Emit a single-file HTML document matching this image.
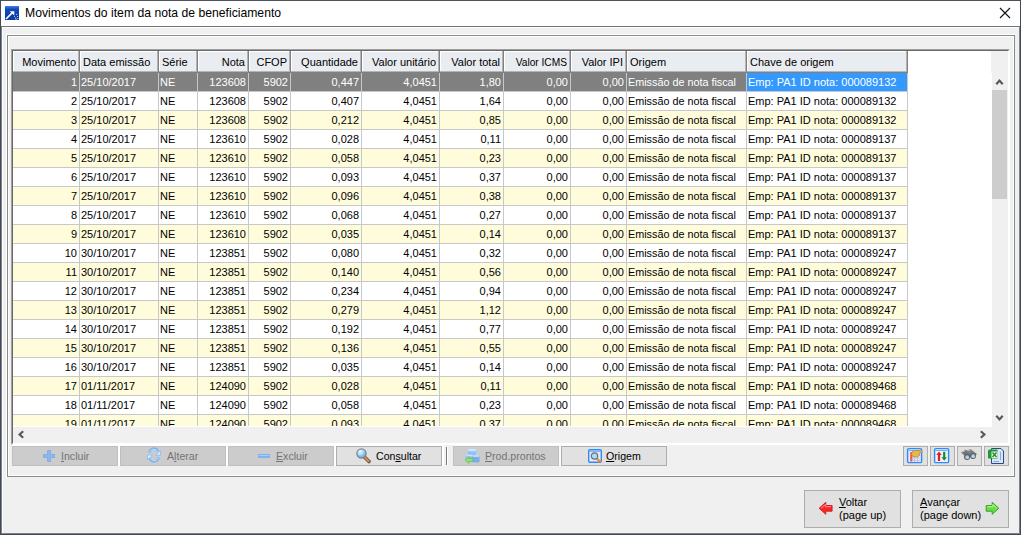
<!DOCTYPE html><html><head><meta charset="utf-8"><style>
*{box-sizing:border-box}
html,body{margin:0;padding:0;background:#fff;width:1025px;height:537px;overflow:hidden;font-family:"Liberation Sans",sans-serif;}
.a{position:absolute}
.t{position:absolute;white-space:nowrap;font-size:11px;line-height:13px;color:#000}
.hd{position:absolute;top:0;height:22px;background:#e9ecf0;box-shadow:inset -1px -1px 0 #808080,inset -2px -2px 0 #b4b4b4,inset 1px 1px 0 #fff}
.btn{position:absolute;top:446px;height:20px;background:#cccccc;border:1px solid #bfbfbf}
.btn.en{background:#e1e1e1;border-color:#adadad}
.bl{position:absolute;top:3px;font-size:10.6px;line-height:13px;white-space:nowrap;color:#747474}
.en .bl{color:#000}
.u{text-decoration:underline}
</style></head><body>

<div class="a" style="left:0;top:0;width:1021px;height:535px;background:#f0f0f0"></div>
<div class="a" style="left:0;top:0;width:1021px;height:27px;background:#fff"></div>
<div class="a" style="left:0;top:26px;width:1021px;height:1px;background:#6f757c"></div>
<div class="a" style="left:0;top:0;width:1021px;height:1px;background:#4b525c"></div>
<div class="a" style="left:0;top:0;width:1px;height:535px;background:#434a55"></div>
<div class="a" style="left:1px;top:27px;width:1px;height:507px;background:#7b828c"></div>
<div class="a" style="left:2px;top:27px;width:1px;height:506px;background:#fff"></div>
<div class="a" style="left:2px;top:27px;width:1017px;height:1px;background:#fff"></div>
<div class="a" style="left:1020px;top:0;width:1px;height:535px;background:#434a55"></div>
<div class="a" style="left:1019px;top:27px;width:1px;height:507px;background:#7b828c"></div>
<div class="a" style="left:0;top:534px;width:1021px;height:1px;background:#434a55"></div>
<div class="a" style="left:1px;top:533px;width:1019px;height:1px;background:#7b828c"></div>
<svg class="a" style="left:5px;top:6px" width="14" height="14" viewBox="0 0 14 14">
<defs><linearGradient id="ig" x1="0" y1="0" x2="0" y2="1"><stop offset="0" stop-color="#3f7ee8"/><stop offset="0.25" stop-color="#1347b8"/><stop offset="1" stop-color="#0a3aa0"/></linearGradient></defs>
<rect x="0" y="0" width="14" height="14" fill="url(#ig)"/>
<path d="M1 13 L7.6 6.4" stroke="#fff" stroke-width="1.5"/><path d="M4.6 5.2 L9.3 5.2 L9.3 9.6 Z" fill="#fff"/>
<path d="M10 12.2h1.2M12 10.5h1M11.2 8.5h1M9.2 10.5h0.8M12.4 12.6h1M10.6 13.4h1" stroke="#c8d8f4" stroke-width="1"/>
</svg>
<div class="t" style="left:25px;top:6px;font-size:12.2px;line-height:15px;color:#000">Movimentos do item da nota de beneficiamento</div>
<svg class="a" style="left:999px;top:7px" width="12" height="12" viewBox="0 0 12 12"><path d="M1 1 L11 11 M11 1 L1 11" stroke="#111" stroke-width="1.1"/></svg>
<div class="a" style="left:6px;top:34px;width:1010px;height:444px;border-left:1px solid #fff;border-top:1px solid #fff"></div>
<div class="a" style="left:7px;top:35px;width:1008px;height:442px;border:1px solid #8a8a8a"></div>
<div class="a" style="left:8px;top:36px;width:1006px;height:440px;border:1px solid #fff"></div>
<div class="a" style="left:11px;top:49px;width:999px;height:396px;background:#fff;border-left:1px solid #a0a0a0;border-top:1px solid #a0a0a0;border-right:1px solid #fff;border-bottom:1px solid #fff"></div>
<div class="a" style="left:12px;top:50px;width:997px;height:394px;border-left:1px solid #696969;border-top:1px solid #696969;border-right:1px solid #fff;border-bottom:1px solid #fff"></div>
<div class="a" style="left:13px;top:51px;width:979px;height:375px;overflow:hidden;background:#fff">
<div class="hd" style="left:0px;width:67px"></div>
<div class="t" style="left:0px;top:5px;width:63px;text-align:right;font-size:11px">Movimento</div>
<div class="hd" style="left:67px;width:79px"></div>
<div class="t" style="left:70px;top:5px">Data emissão</div>
<div class="hd" style="left:146px;width:39px"></div>
<div class="t" style="left:149px;top:5px">Série</div>
<div class="hd" style="left:185px;width:51px"></div>
<div class="t" style="left:185px;top:5px;width:47px;text-align:right;font-size:11px">Nota</div>
<div class="hd" style="left:236px;width:42px"></div>
<div class="t" style="left:236px;top:5px;width:38px;text-align:right;font-size:11px">CFOP</div>
<div class="hd" style="left:278px;width:71px"></div>
<div class="t" style="left:278px;top:5px;width:67px;text-align:right;font-size:11px">Quantidade</div>
<div class="hd" style="left:349px;width:78px"></div>
<div class="t" style="left:349px;top:5px;width:74px;text-align:right;font-size:11px">Valor unitário</div>
<div class="hd" style="left:427px;width:64px"></div>
<div class="t" style="left:427px;top:5px;width:60px;text-align:right;font-size:11px">Valor total</div>
<div class="hd" style="left:491px;width:67px"></div>
<div class="t" style="left:491px;top:5px;width:63px;text-align:right;font-size:10.2px">Valor ICMS</div>
<div class="hd" style="left:558px;width:56px"></div>
<div class="t" style="left:558px;top:5px;width:52px;text-align:right;font-size:11px">Valor IPI</div>
<div class="hd" style="left:614px;width:120px"></div>
<div class="t" style="left:617px;top:5px">Origem</div>
<div class="hd" style="left:734px;width:161px"></div>
<div class="t" style="left:737px;top:5px">Chave de origem</div>
<div class="a" style="left:0;top:22px;width:894px;height:18px;background:#808080"></div>
<div class="a" style="left:0;top:40px;width:895px;height:1px;background:#c8c8c8"></div>
<div class="a" style="left:734px;top:22px;width:160px;height:18px;background:#3399ff"></div>
<div class="t" style="left:0px;top:25px;width:64px;text-align:right;color:#fff">1</div>
<div class="t" style="left:68px;top:25px;color:#fff;font-size:11px">25/10/2017</div>
<div class="t" style="left:147px;top:25px;color:#fff;font-size:11px">NE</div>
<div class="t" style="left:185px;top:25px;width:48px;text-align:right;color:#fff">123608</div>
<div class="t" style="left:236px;top:25px;width:39px;text-align:right;color:#fff">5902</div>
<div class="t" style="left:278px;top:25px;width:68px;text-align:right;color:#fff">0,447</div>
<div class="t" style="left:349px;top:25px;width:75px;text-align:right;color:#fff">4,0451</div>
<div class="t" style="left:427px;top:25px;width:61px;text-align:right;color:#fff">1,80</div>
<div class="t" style="left:491px;top:25px;width:64px;text-align:right;color:#fff">0,00</div>
<div class="t" style="left:558px;top:25px;width:53px;text-align:right;color:#fff">0,00</div>
<div class="t" style="left:615px;top:25px;color:#fff;font-size:10.8px">Emissão de nota fiscal</div>
<div class="t" style="left:735px;top:25px;color:#fff;font-size:11px">Emp: PA1 ID nota: 000089132</div>
<div class="a" style="left:0;top:41px;width:894px;height:18px;background:#ffffff"></div>
<div class="a" style="left:0;top:59px;width:895px;height:1px;background:#c8c8c8"></div>
<div class="t" style="left:0px;top:44px;width:64px;text-align:right;color:#000">2</div>
<div class="t" style="left:68px;top:44px;color:#000;font-size:11px">25/10/2017</div>
<div class="t" style="left:147px;top:44px;color:#000;font-size:11px">NE</div>
<div class="t" style="left:185px;top:44px;width:48px;text-align:right;color:#000">123608</div>
<div class="t" style="left:236px;top:44px;width:39px;text-align:right;color:#000">5902</div>
<div class="t" style="left:278px;top:44px;width:68px;text-align:right;color:#000">0,407</div>
<div class="t" style="left:349px;top:44px;width:75px;text-align:right;color:#000">4,0451</div>
<div class="t" style="left:427px;top:44px;width:61px;text-align:right;color:#000">1,64</div>
<div class="t" style="left:491px;top:44px;width:64px;text-align:right;color:#000">0,00</div>
<div class="t" style="left:558px;top:44px;width:53px;text-align:right;color:#000">0,00</div>
<div class="t" style="left:615px;top:44px;color:#000;font-size:10.8px">Emissão de nota fiscal</div>
<div class="t" style="left:735px;top:44px;color:#000;font-size:11px">Emp: PA1 ID nota: 000089132</div>
<div class="a" style="left:0;top:60px;width:894px;height:18px;background:#fffcdc"></div>
<div class="a" style="left:0;top:78px;width:895px;height:1px;background:#c8c8c8"></div>
<div class="t" style="left:0px;top:63px;width:64px;text-align:right;color:#000">3</div>
<div class="t" style="left:68px;top:63px;color:#000;font-size:11px">25/10/2017</div>
<div class="t" style="left:147px;top:63px;color:#000;font-size:11px">NE</div>
<div class="t" style="left:185px;top:63px;width:48px;text-align:right;color:#000">123608</div>
<div class="t" style="left:236px;top:63px;width:39px;text-align:right;color:#000">5902</div>
<div class="t" style="left:278px;top:63px;width:68px;text-align:right;color:#000">0,212</div>
<div class="t" style="left:349px;top:63px;width:75px;text-align:right;color:#000">4,0451</div>
<div class="t" style="left:427px;top:63px;width:61px;text-align:right;color:#000">0,85</div>
<div class="t" style="left:491px;top:63px;width:64px;text-align:right;color:#000">0,00</div>
<div class="t" style="left:558px;top:63px;width:53px;text-align:right;color:#000">0,00</div>
<div class="t" style="left:615px;top:63px;color:#000;font-size:10.8px">Emissão de nota fiscal</div>
<div class="t" style="left:735px;top:63px;color:#000;font-size:11px">Emp: PA1 ID nota: 000089132</div>
<div class="a" style="left:0;top:79px;width:894px;height:18px;background:#ffffff"></div>
<div class="a" style="left:0;top:97px;width:895px;height:1px;background:#c8c8c8"></div>
<div class="t" style="left:0px;top:82px;width:64px;text-align:right;color:#000">4</div>
<div class="t" style="left:68px;top:82px;color:#000;font-size:11px">25/10/2017</div>
<div class="t" style="left:147px;top:82px;color:#000;font-size:11px">NE</div>
<div class="t" style="left:185px;top:82px;width:48px;text-align:right;color:#000">123610</div>
<div class="t" style="left:236px;top:82px;width:39px;text-align:right;color:#000">5902</div>
<div class="t" style="left:278px;top:82px;width:68px;text-align:right;color:#000">0,028</div>
<div class="t" style="left:349px;top:82px;width:75px;text-align:right;color:#000">4,0451</div>
<div class="t" style="left:427px;top:82px;width:61px;text-align:right;color:#000">0,11</div>
<div class="t" style="left:491px;top:82px;width:64px;text-align:right;color:#000">0,00</div>
<div class="t" style="left:558px;top:82px;width:53px;text-align:right;color:#000">0,00</div>
<div class="t" style="left:615px;top:82px;color:#000;font-size:10.8px">Emissão de nota fiscal</div>
<div class="t" style="left:735px;top:82px;color:#000;font-size:11px">Emp: PA1 ID nota: 000089137</div>
<div class="a" style="left:0;top:98px;width:894px;height:18px;background:#fffcdc"></div>
<div class="a" style="left:0;top:116px;width:895px;height:1px;background:#c8c8c8"></div>
<div class="t" style="left:0px;top:101px;width:64px;text-align:right;color:#000">5</div>
<div class="t" style="left:68px;top:101px;color:#000;font-size:11px">25/10/2017</div>
<div class="t" style="left:147px;top:101px;color:#000;font-size:11px">NE</div>
<div class="t" style="left:185px;top:101px;width:48px;text-align:right;color:#000">123610</div>
<div class="t" style="left:236px;top:101px;width:39px;text-align:right;color:#000">5902</div>
<div class="t" style="left:278px;top:101px;width:68px;text-align:right;color:#000">0,058</div>
<div class="t" style="left:349px;top:101px;width:75px;text-align:right;color:#000">4,0451</div>
<div class="t" style="left:427px;top:101px;width:61px;text-align:right;color:#000">0,23</div>
<div class="t" style="left:491px;top:101px;width:64px;text-align:right;color:#000">0,00</div>
<div class="t" style="left:558px;top:101px;width:53px;text-align:right;color:#000">0,00</div>
<div class="t" style="left:615px;top:101px;color:#000;font-size:10.8px">Emissão de nota fiscal</div>
<div class="t" style="left:735px;top:101px;color:#000;font-size:11px">Emp: PA1 ID nota: 000089137</div>
<div class="a" style="left:0;top:117px;width:894px;height:18px;background:#ffffff"></div>
<div class="a" style="left:0;top:135px;width:895px;height:1px;background:#c8c8c8"></div>
<div class="t" style="left:0px;top:120px;width:64px;text-align:right;color:#000">6</div>
<div class="t" style="left:68px;top:120px;color:#000;font-size:11px">25/10/2017</div>
<div class="t" style="left:147px;top:120px;color:#000;font-size:11px">NE</div>
<div class="t" style="left:185px;top:120px;width:48px;text-align:right;color:#000">123610</div>
<div class="t" style="left:236px;top:120px;width:39px;text-align:right;color:#000">5902</div>
<div class="t" style="left:278px;top:120px;width:68px;text-align:right;color:#000">0,093</div>
<div class="t" style="left:349px;top:120px;width:75px;text-align:right;color:#000">4,0451</div>
<div class="t" style="left:427px;top:120px;width:61px;text-align:right;color:#000">0,37</div>
<div class="t" style="left:491px;top:120px;width:64px;text-align:right;color:#000">0,00</div>
<div class="t" style="left:558px;top:120px;width:53px;text-align:right;color:#000">0,00</div>
<div class="t" style="left:615px;top:120px;color:#000;font-size:10.8px">Emissão de nota fiscal</div>
<div class="t" style="left:735px;top:120px;color:#000;font-size:11px">Emp: PA1 ID nota: 000089137</div>
<div class="a" style="left:0;top:136px;width:894px;height:18px;background:#fffcdc"></div>
<div class="a" style="left:0;top:154px;width:895px;height:1px;background:#c8c8c8"></div>
<div class="t" style="left:0px;top:139px;width:64px;text-align:right;color:#000">7</div>
<div class="t" style="left:68px;top:139px;color:#000;font-size:11px">25/10/2017</div>
<div class="t" style="left:147px;top:139px;color:#000;font-size:11px">NE</div>
<div class="t" style="left:185px;top:139px;width:48px;text-align:right;color:#000">123610</div>
<div class="t" style="left:236px;top:139px;width:39px;text-align:right;color:#000">5902</div>
<div class="t" style="left:278px;top:139px;width:68px;text-align:right;color:#000">0,096</div>
<div class="t" style="left:349px;top:139px;width:75px;text-align:right;color:#000">4,0451</div>
<div class="t" style="left:427px;top:139px;width:61px;text-align:right;color:#000">0,38</div>
<div class="t" style="left:491px;top:139px;width:64px;text-align:right;color:#000">0,00</div>
<div class="t" style="left:558px;top:139px;width:53px;text-align:right;color:#000">0,00</div>
<div class="t" style="left:615px;top:139px;color:#000;font-size:10.8px">Emissão de nota fiscal</div>
<div class="t" style="left:735px;top:139px;color:#000;font-size:11px">Emp: PA1 ID nota: 000089137</div>
<div class="a" style="left:0;top:155px;width:894px;height:18px;background:#ffffff"></div>
<div class="a" style="left:0;top:173px;width:895px;height:1px;background:#c8c8c8"></div>
<div class="t" style="left:0px;top:158px;width:64px;text-align:right;color:#000">8</div>
<div class="t" style="left:68px;top:158px;color:#000;font-size:11px">25/10/2017</div>
<div class="t" style="left:147px;top:158px;color:#000;font-size:11px">NE</div>
<div class="t" style="left:185px;top:158px;width:48px;text-align:right;color:#000">123610</div>
<div class="t" style="left:236px;top:158px;width:39px;text-align:right;color:#000">5902</div>
<div class="t" style="left:278px;top:158px;width:68px;text-align:right;color:#000">0,068</div>
<div class="t" style="left:349px;top:158px;width:75px;text-align:right;color:#000">4,0451</div>
<div class="t" style="left:427px;top:158px;width:61px;text-align:right;color:#000">0,27</div>
<div class="t" style="left:491px;top:158px;width:64px;text-align:right;color:#000">0,00</div>
<div class="t" style="left:558px;top:158px;width:53px;text-align:right;color:#000">0,00</div>
<div class="t" style="left:615px;top:158px;color:#000;font-size:10.8px">Emissão de nota fiscal</div>
<div class="t" style="left:735px;top:158px;color:#000;font-size:11px">Emp: PA1 ID nota: 000089137</div>
<div class="a" style="left:0;top:174px;width:894px;height:18px;background:#fffcdc"></div>
<div class="a" style="left:0;top:192px;width:895px;height:1px;background:#c8c8c8"></div>
<div class="t" style="left:0px;top:177px;width:64px;text-align:right;color:#000">9</div>
<div class="t" style="left:68px;top:177px;color:#000;font-size:11px">25/10/2017</div>
<div class="t" style="left:147px;top:177px;color:#000;font-size:11px">NE</div>
<div class="t" style="left:185px;top:177px;width:48px;text-align:right;color:#000">123610</div>
<div class="t" style="left:236px;top:177px;width:39px;text-align:right;color:#000">5902</div>
<div class="t" style="left:278px;top:177px;width:68px;text-align:right;color:#000">0,035</div>
<div class="t" style="left:349px;top:177px;width:75px;text-align:right;color:#000">4,0451</div>
<div class="t" style="left:427px;top:177px;width:61px;text-align:right;color:#000">0,14</div>
<div class="t" style="left:491px;top:177px;width:64px;text-align:right;color:#000">0,00</div>
<div class="t" style="left:558px;top:177px;width:53px;text-align:right;color:#000">0,00</div>
<div class="t" style="left:615px;top:177px;color:#000;font-size:10.8px">Emissão de nota fiscal</div>
<div class="t" style="left:735px;top:177px;color:#000;font-size:11px">Emp: PA1 ID nota: 000089137</div>
<div class="a" style="left:0;top:193px;width:894px;height:18px;background:#ffffff"></div>
<div class="a" style="left:0;top:211px;width:895px;height:1px;background:#c8c8c8"></div>
<div class="t" style="left:0px;top:196px;width:64px;text-align:right;color:#000">10</div>
<div class="t" style="left:68px;top:196px;color:#000;font-size:11px">30/10/2017</div>
<div class="t" style="left:147px;top:196px;color:#000;font-size:11px">NE</div>
<div class="t" style="left:185px;top:196px;width:48px;text-align:right;color:#000">123851</div>
<div class="t" style="left:236px;top:196px;width:39px;text-align:right;color:#000">5902</div>
<div class="t" style="left:278px;top:196px;width:68px;text-align:right;color:#000">0,080</div>
<div class="t" style="left:349px;top:196px;width:75px;text-align:right;color:#000">4,0451</div>
<div class="t" style="left:427px;top:196px;width:61px;text-align:right;color:#000">0,32</div>
<div class="t" style="left:491px;top:196px;width:64px;text-align:right;color:#000">0,00</div>
<div class="t" style="left:558px;top:196px;width:53px;text-align:right;color:#000">0,00</div>
<div class="t" style="left:615px;top:196px;color:#000;font-size:10.8px">Emissão de nota fiscal</div>
<div class="t" style="left:735px;top:196px;color:#000;font-size:11px">Emp: PA1 ID nota: 000089247</div>
<div class="a" style="left:0;top:212px;width:894px;height:18px;background:#fffcdc"></div>
<div class="a" style="left:0;top:230px;width:895px;height:1px;background:#c8c8c8"></div>
<div class="t" style="left:0px;top:215px;width:64px;text-align:right;color:#000">11</div>
<div class="t" style="left:68px;top:215px;color:#000;font-size:11px">30/10/2017</div>
<div class="t" style="left:147px;top:215px;color:#000;font-size:11px">NE</div>
<div class="t" style="left:185px;top:215px;width:48px;text-align:right;color:#000">123851</div>
<div class="t" style="left:236px;top:215px;width:39px;text-align:right;color:#000">5902</div>
<div class="t" style="left:278px;top:215px;width:68px;text-align:right;color:#000">0,140</div>
<div class="t" style="left:349px;top:215px;width:75px;text-align:right;color:#000">4,0451</div>
<div class="t" style="left:427px;top:215px;width:61px;text-align:right;color:#000">0,56</div>
<div class="t" style="left:491px;top:215px;width:64px;text-align:right;color:#000">0,00</div>
<div class="t" style="left:558px;top:215px;width:53px;text-align:right;color:#000">0,00</div>
<div class="t" style="left:615px;top:215px;color:#000;font-size:10.8px">Emissão de nota fiscal</div>
<div class="t" style="left:735px;top:215px;color:#000;font-size:11px">Emp: PA1 ID nota: 000089247</div>
<div class="a" style="left:0;top:231px;width:894px;height:18px;background:#ffffff"></div>
<div class="a" style="left:0;top:249px;width:895px;height:1px;background:#c8c8c8"></div>
<div class="t" style="left:0px;top:234px;width:64px;text-align:right;color:#000">12</div>
<div class="t" style="left:68px;top:234px;color:#000;font-size:11px">30/10/2017</div>
<div class="t" style="left:147px;top:234px;color:#000;font-size:11px">NE</div>
<div class="t" style="left:185px;top:234px;width:48px;text-align:right;color:#000">123851</div>
<div class="t" style="left:236px;top:234px;width:39px;text-align:right;color:#000">5902</div>
<div class="t" style="left:278px;top:234px;width:68px;text-align:right;color:#000">0,234</div>
<div class="t" style="left:349px;top:234px;width:75px;text-align:right;color:#000">4,0451</div>
<div class="t" style="left:427px;top:234px;width:61px;text-align:right;color:#000">0,94</div>
<div class="t" style="left:491px;top:234px;width:64px;text-align:right;color:#000">0,00</div>
<div class="t" style="left:558px;top:234px;width:53px;text-align:right;color:#000">0,00</div>
<div class="t" style="left:615px;top:234px;color:#000;font-size:10.8px">Emissão de nota fiscal</div>
<div class="t" style="left:735px;top:234px;color:#000;font-size:11px">Emp: PA1 ID nota: 000089247</div>
<div class="a" style="left:0;top:250px;width:894px;height:18px;background:#fffcdc"></div>
<div class="a" style="left:0;top:268px;width:895px;height:1px;background:#c8c8c8"></div>
<div class="t" style="left:0px;top:253px;width:64px;text-align:right;color:#000">13</div>
<div class="t" style="left:68px;top:253px;color:#000;font-size:11px">30/10/2017</div>
<div class="t" style="left:147px;top:253px;color:#000;font-size:11px">NE</div>
<div class="t" style="left:185px;top:253px;width:48px;text-align:right;color:#000">123851</div>
<div class="t" style="left:236px;top:253px;width:39px;text-align:right;color:#000">5902</div>
<div class="t" style="left:278px;top:253px;width:68px;text-align:right;color:#000">0,279</div>
<div class="t" style="left:349px;top:253px;width:75px;text-align:right;color:#000">4,0451</div>
<div class="t" style="left:427px;top:253px;width:61px;text-align:right;color:#000">1,12</div>
<div class="t" style="left:491px;top:253px;width:64px;text-align:right;color:#000">0,00</div>
<div class="t" style="left:558px;top:253px;width:53px;text-align:right;color:#000">0,00</div>
<div class="t" style="left:615px;top:253px;color:#000;font-size:10.8px">Emissão de nota fiscal</div>
<div class="t" style="left:735px;top:253px;color:#000;font-size:11px">Emp: PA1 ID nota: 000089247</div>
<div class="a" style="left:0;top:269px;width:894px;height:18px;background:#ffffff"></div>
<div class="a" style="left:0;top:287px;width:895px;height:1px;background:#c8c8c8"></div>
<div class="t" style="left:0px;top:272px;width:64px;text-align:right;color:#000">14</div>
<div class="t" style="left:68px;top:272px;color:#000;font-size:11px">30/10/2017</div>
<div class="t" style="left:147px;top:272px;color:#000;font-size:11px">NE</div>
<div class="t" style="left:185px;top:272px;width:48px;text-align:right;color:#000">123851</div>
<div class="t" style="left:236px;top:272px;width:39px;text-align:right;color:#000">5902</div>
<div class="t" style="left:278px;top:272px;width:68px;text-align:right;color:#000">0,192</div>
<div class="t" style="left:349px;top:272px;width:75px;text-align:right;color:#000">4,0451</div>
<div class="t" style="left:427px;top:272px;width:61px;text-align:right;color:#000">0,77</div>
<div class="t" style="left:491px;top:272px;width:64px;text-align:right;color:#000">0,00</div>
<div class="t" style="left:558px;top:272px;width:53px;text-align:right;color:#000">0,00</div>
<div class="t" style="left:615px;top:272px;color:#000;font-size:10.8px">Emissão de nota fiscal</div>
<div class="t" style="left:735px;top:272px;color:#000;font-size:11px">Emp: PA1 ID nota: 000089247</div>
<div class="a" style="left:0;top:288px;width:894px;height:18px;background:#fffcdc"></div>
<div class="a" style="left:0;top:306px;width:895px;height:1px;background:#c8c8c8"></div>
<div class="t" style="left:0px;top:291px;width:64px;text-align:right;color:#000">15</div>
<div class="t" style="left:68px;top:291px;color:#000;font-size:11px">30/10/2017</div>
<div class="t" style="left:147px;top:291px;color:#000;font-size:11px">NE</div>
<div class="t" style="left:185px;top:291px;width:48px;text-align:right;color:#000">123851</div>
<div class="t" style="left:236px;top:291px;width:39px;text-align:right;color:#000">5902</div>
<div class="t" style="left:278px;top:291px;width:68px;text-align:right;color:#000">0,136</div>
<div class="t" style="left:349px;top:291px;width:75px;text-align:right;color:#000">4,0451</div>
<div class="t" style="left:427px;top:291px;width:61px;text-align:right;color:#000">0,55</div>
<div class="t" style="left:491px;top:291px;width:64px;text-align:right;color:#000">0,00</div>
<div class="t" style="left:558px;top:291px;width:53px;text-align:right;color:#000">0,00</div>
<div class="t" style="left:615px;top:291px;color:#000;font-size:10.8px">Emissão de nota fiscal</div>
<div class="t" style="left:735px;top:291px;color:#000;font-size:11px">Emp: PA1 ID nota: 000089247</div>
<div class="a" style="left:0;top:307px;width:894px;height:18px;background:#ffffff"></div>
<div class="a" style="left:0;top:325px;width:895px;height:1px;background:#c8c8c8"></div>
<div class="t" style="left:0px;top:310px;width:64px;text-align:right;color:#000">16</div>
<div class="t" style="left:68px;top:310px;color:#000;font-size:11px">30/10/2017</div>
<div class="t" style="left:147px;top:310px;color:#000;font-size:11px">NE</div>
<div class="t" style="left:185px;top:310px;width:48px;text-align:right;color:#000">123851</div>
<div class="t" style="left:236px;top:310px;width:39px;text-align:right;color:#000">5902</div>
<div class="t" style="left:278px;top:310px;width:68px;text-align:right;color:#000">0,035</div>
<div class="t" style="left:349px;top:310px;width:75px;text-align:right;color:#000">4,0451</div>
<div class="t" style="left:427px;top:310px;width:61px;text-align:right;color:#000">0,14</div>
<div class="t" style="left:491px;top:310px;width:64px;text-align:right;color:#000">0,00</div>
<div class="t" style="left:558px;top:310px;width:53px;text-align:right;color:#000">0,00</div>
<div class="t" style="left:615px;top:310px;color:#000;font-size:10.8px">Emissão de nota fiscal</div>
<div class="t" style="left:735px;top:310px;color:#000;font-size:11px">Emp: PA1 ID nota: 000089247</div>
<div class="a" style="left:0;top:326px;width:894px;height:18px;background:#fffcdc"></div>
<div class="a" style="left:0;top:344px;width:895px;height:1px;background:#c8c8c8"></div>
<div class="t" style="left:0px;top:329px;width:64px;text-align:right;color:#000">17</div>
<div class="t" style="left:68px;top:329px;color:#000;font-size:11px">01/11/2017</div>
<div class="t" style="left:147px;top:329px;color:#000;font-size:11px">NE</div>
<div class="t" style="left:185px;top:329px;width:48px;text-align:right;color:#000">124090</div>
<div class="t" style="left:236px;top:329px;width:39px;text-align:right;color:#000">5902</div>
<div class="t" style="left:278px;top:329px;width:68px;text-align:right;color:#000">0,028</div>
<div class="t" style="left:349px;top:329px;width:75px;text-align:right;color:#000">4,0451</div>
<div class="t" style="left:427px;top:329px;width:61px;text-align:right;color:#000">0,11</div>
<div class="t" style="left:491px;top:329px;width:64px;text-align:right;color:#000">0,00</div>
<div class="t" style="left:558px;top:329px;width:53px;text-align:right;color:#000">0,00</div>
<div class="t" style="left:615px;top:329px;color:#000;font-size:10.8px">Emissão de nota fiscal</div>
<div class="t" style="left:735px;top:329px;color:#000;font-size:11px">Emp: PA1 ID nota: 000089468</div>
<div class="a" style="left:0;top:345px;width:894px;height:18px;background:#ffffff"></div>
<div class="a" style="left:0;top:363px;width:895px;height:1px;background:#c8c8c8"></div>
<div class="t" style="left:0px;top:348px;width:64px;text-align:right;color:#000">18</div>
<div class="t" style="left:68px;top:348px;color:#000;font-size:11px">01/11/2017</div>
<div class="t" style="left:147px;top:348px;color:#000;font-size:11px">NE</div>
<div class="t" style="left:185px;top:348px;width:48px;text-align:right;color:#000">124090</div>
<div class="t" style="left:236px;top:348px;width:39px;text-align:right;color:#000">5902</div>
<div class="t" style="left:278px;top:348px;width:68px;text-align:right;color:#000">0,058</div>
<div class="t" style="left:349px;top:348px;width:75px;text-align:right;color:#000">4,0451</div>
<div class="t" style="left:427px;top:348px;width:61px;text-align:right;color:#000">0,23</div>
<div class="t" style="left:491px;top:348px;width:64px;text-align:right;color:#000">0,00</div>
<div class="t" style="left:558px;top:348px;width:53px;text-align:right;color:#000">0,00</div>
<div class="t" style="left:615px;top:348px;color:#000;font-size:10.8px">Emissão de nota fiscal</div>
<div class="t" style="left:735px;top:348px;color:#000;font-size:11px">Emp: PA1 ID nota: 000089468</div>
<div class="a" style="left:0;top:364px;width:894px;height:18px;background:#fffcdc"></div>
<div class="a" style="left:0;top:382px;width:895px;height:1px;background:#c8c8c8"></div>
<div class="t" style="left:0px;top:367px;width:64px;text-align:right;color:#000">19</div>
<div class="t" style="left:68px;top:367px;color:#000;font-size:11px">01/11/2017</div>
<div class="t" style="left:147px;top:367px;color:#000;font-size:11px">NE</div>
<div class="t" style="left:185px;top:367px;width:48px;text-align:right;color:#000">124090</div>
<div class="t" style="left:236px;top:367px;width:39px;text-align:right;color:#000">5902</div>
<div class="t" style="left:278px;top:367px;width:68px;text-align:right;color:#000">0,093</div>
<div class="t" style="left:349px;top:367px;width:75px;text-align:right;color:#000">4,0451</div>
<div class="t" style="left:427px;top:367px;width:61px;text-align:right;color:#000">0,37</div>
<div class="t" style="left:491px;top:367px;width:64px;text-align:right;color:#000">0,00</div>
<div class="t" style="left:558px;top:367px;width:53px;text-align:right;color:#000">0,00</div>
<div class="t" style="left:615px;top:367px;color:#000;font-size:10.8px">Emissão de nota fiscal</div>
<div class="t" style="left:735px;top:367px;color:#000;font-size:11px">Emp: PA1 ID nota: 000089468</div>
<div class="a" style="left:66px;top:22px;width:1px;height:360px;background:#c8c8c8"></div>
<div class="a" style="left:145px;top:22px;width:1px;height:360px;background:#c8c8c8"></div>
<div class="a" style="left:184px;top:22px;width:1px;height:360px;background:#c8c8c8"></div>
<div class="a" style="left:235px;top:22px;width:1px;height:360px;background:#c8c8c8"></div>
<div class="a" style="left:277px;top:22px;width:1px;height:360px;background:#c8c8c8"></div>
<div class="a" style="left:348px;top:22px;width:1px;height:360px;background:#c8c8c8"></div>
<div class="a" style="left:426px;top:22px;width:1px;height:360px;background:#c8c8c8"></div>
<div class="a" style="left:490px;top:22px;width:1px;height:360px;background:#c8c8c8"></div>
<div class="a" style="left:557px;top:22px;width:1px;height:360px;background:#c8c8c8"></div>
<div class="a" style="left:613px;top:22px;width:1px;height:360px;background:#c8c8c8"></div>
<div class="a" style="left:733px;top:22px;width:1px;height:360px;background:#c8c8c8"></div>
<div class="a" style="left:894px;top:22px;width:1px;height:360px;background:#c8c8c8"></div>
</div>
<div class="a" style="left:991px;top:51px;width:17px;height:22px;background:#f0f0f0"></div>
<div class="a" style="left:992px;top:73px;width:16px;height:354px;background:#f0f0f0"></div>
<svg class="a" style="left:995px;top:77px" width="10" height="10" viewBox="0 0 10 10"><path d="M1.3 7.2 L4.5 3.6 L7.7 7.2" fill="none" stroke="#585858" stroke-width="2.2"/></svg>
<div class="a" style="left:992px;top:90px;width:15px;height:109px;background:#cdcdcd"></div>
<svg class="a" style="left:995px;top:413px" width="10" height="10" viewBox="0 0 10 10"><path d="M1.3 2.8 L4.5 6.4 L7.7 2.8" fill="none" stroke="#585858" stroke-width="2.2"/></svg>
<div class="a" style="left:13px;top:426px;width:979px;height:1px;background:#fff"></div>
<div class="a" style="left:13px;top:427px;width:995px;height:16px;background:#f0f0f0"></div>
<svg class="a" style="left:16px;top:430px" width="10" height="10" viewBox="0 0 10 10"><path d="M7.2 1.3 L3.6 4.5 L7.2 7.7" fill="none" stroke="#585858" stroke-width="2.2"/></svg>
<svg class="a" style="left:978px;top:430px" width="10" height="10" viewBox="0 0 10 10"><path d="M2.8 1.3 L6.4 4.5 L2.8 7.7" fill="none" stroke="#585858" stroke-width="2.2"/></svg>
<div class="a" style="left:12px;top:445px;width:432px;height:21px;background:#fff"></div>
<div class="a" style="left:453px;top:445px;width:214px;height:21px;background:#fbfbfb"></div>
<div class="btn" style="left:12px;width:106px"><svg class="a" style="left:30px;top:3px" width="12" height="12" viewBox="0 0 12 12"><path d="M4.5 0.5h3v4h4v3h-4v4h-3v-4h-4v-3h4z" fill="#8ab8f2" stroke="#6f9fe2" stroke-width="0.6"/></svg><div class="bl" style="left:48px"><span class="u">I</span>ncluir</div></div>
<div class="btn" style="left:120px;width:106px"><svg class="a" style="left:23px;top:-2px" width="20" height="20" viewBox="0 0 20 20"><g fill="none" stroke-linecap="butt"><path d="M5.4 7.4 Q6.8 3.6 10 3.7 Q12.6 3.9 14.2 6.8" stroke="#7fb6ee" stroke-width="2.8"/><path d="M5.8 7 Q7 4.4 10 4.4 Q12.2 4.6 13.5 7" stroke="#c4e2fc" stroke-width="1"/><path d="M14.6 12.6 Q13.2 16.4 10 16.3 Q7.4 16.1 5.8 13.2" stroke="#7fb6ee" stroke-width="2.8"/><path d="M14 13 Q12.8 15.6 10 15.6 Q7.8 15.4 6.5 13" stroke="#c4e2fc" stroke-width="1"/></g><path d="M16.8 4.8 L16.8 10.8 L10.8 10.4 Z" fill="#8cc2f4"/><path d="M15.8 6.6 L15.8 9.8 L12.6 9.6 Z" fill="#e2f2fe"/><path d="M3.2 9.4 L3.2 15.4 L9.2 9.6 Z" fill="#8cc2f4"/><path d="M4.2 10.4 L4.2 13.4 L7.4 10.4 Z" fill="#eef8ff"/></svg><div class="bl" style="left:46px">A<span class="u">l</span>terar</div></div>
<div class="btn" style="left:228px;width:106px"><svg class="a" style="left:29px;top:7px" width="12" height="4" viewBox="0 0 12 4"><rect x="0" y="0" width="12" height="4" fill="#80b2f2"/><rect x="1" y="1" width="10" height="1" fill="#a8cefa"/></svg><div class="bl" style="left:47px"><span class="u">E</span>xcluir</div></div>
<div class="btn en" style="left:336px;width:106px"><svg class="a" style="left:17px;top:0px" width="18" height="18" viewBox="0 0 18 18"><defs><radialGradient id="lg" cx="0.35" cy="0.3" r="0.7"><stop offset="0" stop-color="#f4fbff"/><stop offset="0.5" stop-color="#a8d8f4"/><stop offset="1" stop-color="#5aa6dc"/></radialGradient></defs><path d="M10.5 10 L15 14.5" stroke="#505050" stroke-width="3.6" stroke-linecap="round"/><path d="M10.8 10.3 L14.7 14.2" stroke="#f08a30" stroke-width="2" stroke-linecap="round"/><circle cx="7.5" cy="6.5" r="4.6" fill="url(#lg)" stroke="#7a8a98" stroke-width="1.3"/></svg><div class="bl" style="left:39px">Con<span class="u">s</span>ultar</div></div>
<div class="a" style="left:446px;top:447px;width:1px;height:18px;background:#7a7a7a"></div>
<div class="a" style="left:447px;top:447px;width:1px;height:18px;background:#fff"></div>
<div class="btn" style="left:453px;width:106px"><svg class="a" style="left:10px;top:1px" width="17" height="17" viewBox="0 0 17 17"><rect x="4" y="1" width="8" height="7" rx="1.2" fill="#8ec0f2"/><rect x="4" y="1" width="8" height="2.2" rx="1" fill="#cde6fd"/><rect x="1.5" y="6.5" width="7.5" height="7" rx="1.2" fill="#86b8ee"/><rect x="1.5" y="6.5" width="7.5" height="2" rx="1" fill="#c4e0fb"/><rect x="8.5" y="7" width="7" height="7.5" rx="1.2" fill="#7aaee8"/><rect x="8.5" y="7" width="7" height="2" rx="1" fill="#bcdcfa"/><path d="M1 12 L5 8.5 V10.5 H9 V13.5 H5 V15.5 Z" fill="#8ee07a" stroke="#5cb848" stroke-width="0.6"/></svg><div class="bl" style="left:31px"><span class="u">P</span>rod.prontos</div></div>
<div class="btn en" style="left:561px;width:106px"><svg class="a" style="left:26px;top:2px" width="15" height="15" viewBox="0 0 15 15"><rect x="0.7" y="0.7" width="12.6" height="12.6" rx="1.2" fill="#ebe8fa" stroke="#2b8ef6" stroke-width="1.4"/><path d="M1.5 2.6 H12.5" stroke="#6ab4fa" stroke-width="1"/><path d="M8.6 9.2 L12.8 13.4" stroke="#f07a28" stroke-width="2.2"/><path d="M9.5 10.1 L11.8 12.4" stroke="#ffd040" stroke-width="0.9" stroke-dasharray="1 1"/><circle cx="6.5" cy="7" r="3.2" fill="#a8dcf8" stroke="#707070" stroke-width="1.2"/></svg><div class="bl" style="left:44px"><span class="u">O</span>rigem</div></div>
<div class="btn" style="left:903px;width:25px;background:#e1e1e1;border-color:#adadad"></div>
<div class="btn" style="left:930px;width:25px;background:#e1e1e1;border-color:#adadad"></div>
<div class="btn" style="left:957px;width:25px;background:#e1e1e1;border-color:#adadad"></div>
<div class="btn" style="left:984px;width:25px;background:#e1e1e1;border-color:#adadad"></div>
<svg class="a" style="left:906px;top:447px" width="18" height="17" viewBox="0 0 18 17">
<rect x="1.6" y="1.6" width="14" height="14" rx="1.2" fill="#ece8fa" stroke="#2b8ef6" stroke-width="1.4"/>
<path d="M2.5 3.5 H14.5" stroke="#6ab4fa" stroke-width="1"/>
<path d="M6.5 8.5h8M6.5 11h8M6.5 13.5h8M8.5 6v9M11.5 6v9" stroke="#c0b8e0" stroke-width="0.8"/>
<rect x="4.2" y="5" width="2.2" height="9.5" fill="#ec5a4a"/>
<path d="M5.5 6.5 Q6 3.5 9.5 3.4 L15.5 3.6 Q17.2 4.4 15.8 5.6 L13.5 5.8 Q14.5 7 13 8 Q13.5 9.2 11.5 9.6 L8 9.8 Q5.5 9.5 5.5 6.5 Z" fill="#e8b850" stroke="#b0802a" stroke-width="0.7"/>
</svg>
<svg class="a" style="left:933px;top:447px" width="18" height="17" viewBox="0 0 18 17">
<rect x="1.6" y="1.6" width="14" height="14" rx="1.2" fill="#f0f0fa" stroke="#2b8ef6" stroke-width="1.4"/>
<path d="M2.5 3.5 H14.5" stroke="#6ab4fa" stroke-width="1"/>
<path d="M6 14 V6.5" stroke="#e81c1c" stroke-width="2.2"/><path d="M3.3 8 L6 4.6 L8.7 8 Z" fill="#e81c1c"/>
<path d="M11.2 4.8 V11.5" stroke="#1a8a34" stroke-width="2.2"/><path d="M8.5 10.2 L11.2 13.8 L13.9 10.2 Z" fill="#1a8a34"/>
</svg>
<svg class="a" style="left:959px;top:448px" width="20" height="13" viewBox="0 0 20 13">
<path d="M2 4.5 L6.5 1.6 L13 7 L9.5 11 Z" fill="#747474"/>
<path d="M7.5 2.6 L11.5 1 L18 6 L14 10.2 Z" fill="#808080"/>
<circle cx="8" cy="9" r="3" fill="#5e5e5e"/><circle cx="14" cy="8" r="3" fill="#5e5e5e"/>
<circle cx="8.2" cy="9.2" r="1.9" fill="#a6d4fa"/><circle cx="14.2" cy="8.2" r="1.9" fill="#a6d4fa"/>
<path d="M3 4.2 L6.4 2.3 M8.5 2.8 L11.4 1.7" stroke="#d0d0d0" stroke-width="0.9"/>
</svg>
<svg class="a" style="left:987px;top:447px" width="18" height="18" viewBox="0 0 18 18">
<path d="M4.5 1.5 H14 L16.5 4 V16.5 H4.5 Z" fill="#d8e6f8" stroke="#2a4a80" stroke-width="1"/>
<path d="M6.5 14.5 H12 M13.5 5 V13" stroke="#7aa0d8" stroke-width="0.9"/>
<path d="M1 4 Q1 2.5 2.5 2.5 H10.5 V11.5 H1 Z" fill="#1e9a34"/>
<rect x="4.5" y="4.5" width="6" height="6.5" fill="#e6f6da"/>
<path d="M5.5 5.5 L9.5 10 M9.5 5.5 L5.5 10" stroke="#2a8a3a" stroke-width="1.4"/>
</svg>
<div class="a" style="left:804px;top:490px;width:97px;height:38px;background:#e1e1e1;border:1px solid #adadad"></div>
<svg class="a" style="left:818px;top:501px" width="16" height="14" viewBox="0 0 16 14">
<path d="M1.1 7.3 L7.8 1.3 V4.5 H14.1 V10.2 H7.8 V13.3 Z" fill="#f82828" stroke="#c81010" stroke-width="0.8"/>
<path d="M3 7.3 L7.4 3.5 V5.7 H13.2" stroke="#ff9090" stroke-width="1" fill="none"/>
</svg>
<div class="t" style="left:839px;top:496px;line-height:13px"><span class="u">V</span>oltar<br>(page up)</div>
<div class="a" style="left:912px;top:490px;width:97px;height:38px;background:#e1e1e1;border:1px solid #adadad"></div>
<svg class="a" style="left:985px;top:501px" width="16" height="14" viewBox="0 0 16 14">
<path d="M13.8 7.3 L7.2 1.3 V4.5 H1.2 V10.2 H7.2 V13.3 Z" fill="#6ada48" stroke="#22a01a" stroke-width="0.9"/>
<path d="M11.8 7.3 L7.8 3.5 V5.7 H2.2" stroke="#b8f8a0" stroke-width="1" fill="none"/>
</svg>
<div class="t" style="left:920px;top:496px;line-height:13px"><span class="u">A</span>vançar<br>(page down)</div>
</body></html>
